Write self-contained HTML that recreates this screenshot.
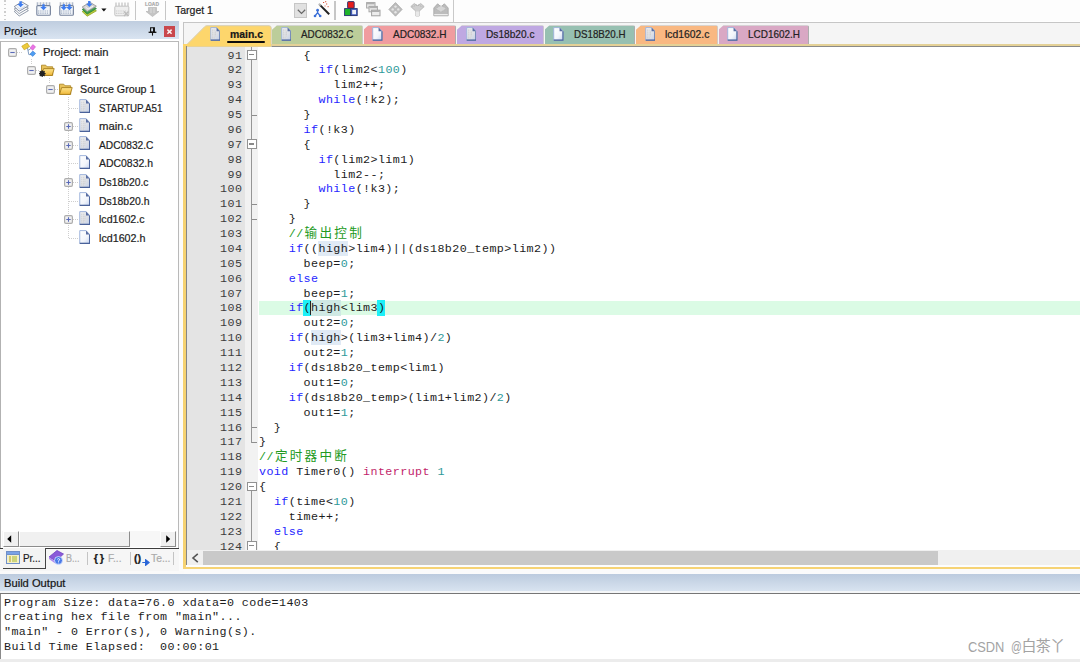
<!DOCTYPE html>
<html lang="zh"><head><meta charset="utf-8"><title>main - uVision</title>
<style>
html,body{margin:0;padding:0}
body{width:1080px;height:662px;position:relative;overflow:hidden;background:#fff;font-family:"Liberation Sans", "Noto Sans CJK SC", sans-serif;font-size:11.2px;color:#1a1a1a}
div,span,svg{position:absolute;box-sizing:border-box}
span.t{white-space:pre;line-height:1;-webkit-text-stroke:0.22px}
.code span, .out span, .ln span {position:static}
.code{font-family:"Liberation Mono", "Noto Sans CJK SC", monospace;font-size:11.7px;line-height:14.88px;height:14.88px;white-space:pre;color:#1c1c1c;left:259.0px;letter-spacing:0.419px}
.ln{font-family:"Liberation Mono", "Noto Sans CJK SC", monospace;font-size:11.7px;line-height:14.88px;height:14.88px;white-space:pre;color:#3c3c3c;left:187px;width:55.42px;text-align:right;letter-spacing:0.419px}
.out{font-family:"Liberation Mono", "Noto Sans CJK SC", monospace;font-size:11.7px;line-height:14.88px;height:14.88px;white-space:pre;color:#1c1c1c;left:4px;letter-spacing:0.419px}
.k{color:#2626ff} .n{color:#2e9a9a} .c{color:#229a22} .m{color:#c21f6b}
.cj{font-size:12.6px;letter-spacing:2.28px;line-height:1px;margin-left:1px;margin-right:-1px}
.hw{background:#e0eaf5;padding:1.3px 0 0.2px}
.hw2{background:#cfe9e4;padding:1.3px 0 0.2px}
.bm{background:#1cf0f8;margin-left:-0.8px;padding:1.3px 0 0.2px 0.8px}
</style></head>
<body>
<div style="left:0px;top:0px;width:1080px;height:21px;background:#fdfdfd"></div>
<div style="left:0px;top:0px;width:453.8px;height:21.6px;background:#fdfdfd;border-right:1.1px solid #c9c9c9"></div>
<div style="left:4.2px;top:0.2px;width:1.5px;height:1.4px;background:#cdcdcd"></div>
<div style="left:4.2px;top:3.9200000000000004px;width:1.5px;height:1.4px;background:#cdcdcd"></div>
<div style="left:4.2px;top:7.640000000000001px;width:1.5px;height:1.4px;background:#cdcdcd"></div>
<div style="left:4.2px;top:11.36px;width:1.5px;height:1.4px;background:#cdcdcd"></div>
<div style="left:4.2px;top:15.08px;width:1.5px;height:1.4px;background:#cdcdcd"></div>
<div style="left:4.2px;top:18.8px;width:1.5px;height:1.4px;background:#cdcdcd"></div>
<svg style="left:13px;top:0.8px" width="17" height="17" viewBox="0 0 17 17"><path d="M1.2 10.4l5 4.6 9.2-5.4-6.2-4z" fill="#fdfdfd" stroke="#8791a2" stroke-width="0.9"/><path d="M1.2 8l5 4.6 9.2-5.4-6.2-4z" fill="#fdfdfd" stroke="#8791a2" stroke-width="0.9"/><path d="M1.2 5.6l5 4.6 9.2-5.4-6.6-4z" fill="#f2f5fa" stroke="#7b8598" stroke-width="0.9"/><path d="M4 5.6l3 2.6 5.2-3" stroke="#c9d3e3" stroke-width="0.8" fill="none"/><path d="M6.3999999999999995 0.3v2.8h-2l3.2 3.2 3.2-3.2h-2v-2.8z" fill="#3f7df0"/></svg>
<svg style="left:35.5px;top:1.3px" width="15" height="15.5" viewBox="0 0 15 15.5"><path d="M1.5 1.2v3M4.5 1.2v3M7.5 1.2v3M10.5 1.2v3M13.5 1.2v3" stroke="#b4bccb" stroke-width="1.6"/><rect x="0.8" y="4.6" width="13.6" height="9.6" rx="1" fill="#f3f6fa" stroke="#76839c" stroke-width="1.1"/><path d="M2 10h11.4M2 12.2h11.4" stroke="#9fabc0" stroke-width="1.2" stroke-dasharray="1.3 0.9"/><path d="M6.3 3.2v2.8h-2l3.2 3.2 3.2-3.2h-2v-2.8z" fill="#3f7df0"/></svg>
<svg style="left:58.5px;top:1.3px" width="15" height="15.5" viewBox="0 0 15 15.5"><path d="M1.5 1.2v3M4.5 1.2v3M7.5 1.2v3M10.5 1.2v3M13.5 1.2v3" stroke="#b4bccb" stroke-width="1.6"/><rect x="0.8" y="4.6" width="13.6" height="9.6" rx="1" fill="#f3f6fa" stroke="#76839c" stroke-width="1.1"/><path d="M2 10h11.4M2 12.2h11.4" stroke="#9fabc0" stroke-width="1.2" stroke-dasharray="1.3 0.9"/><path d="M3.5999999999999996 3.2v2.8h-2l3.2 3.2 3.2-3.2h-2v-2.8z" fill="#3f7df0"/><path d="M9.200000000000001 3.2v2.8h-2l3.2 3.2 3.2-3.2h-2v-2.8z" fill="#3f7df0"/></svg>
<svg style="left:81px;top:0.8px" width="17" height="17" viewBox="0 0 17 17"><path d="M1.2 10.6l5 4.6 9.2-5.4-6.2-4z" fill="#b9cb3c" stroke="#8fa422" stroke-width="0.8"/><path d="M1.2 8.4l5 4.6 9.2-5.4-6.2-4z" fill="#3fa24c" stroke="#2a8038" stroke-width="0.8"/><path d="M1.2 6l5 4.6 9.2-5.4-6.6-4z" fill="#d2d2d2" stroke="#8f8f8f" stroke-width="0.8"/><path d="M4.4 5.8l2.6 2.4 5-3" stroke="#f4f4f4" stroke-width="1" fill="none"/><path d="M7.1000000000000005 0v2.8h-2l3.2 3.2 3.2-3.2h-2v-2.8z" fill="#3f7df0"/></svg>
<svg style="left:101px;top:7.5px" width="6" height="4" viewBox="0 0 6 4"><path d="M0.3 0.5h5.2l-2.6 3z" fill="#111"/></svg>
<svg style="left:114px;top:1.6px" width="16" height="15" viewBox="0 0 16 15"><path d="M2 0.5v4M5 0.5v4M8 0.5v4M11 0.5v4M14 0.5v4" stroke="#cfcfcf" stroke-width="1.6"/><rect x="0.8" y="4.2" width="14" height="9.6" rx="1" fill="#eeeeee" stroke="#c2c2c2" stroke-width="1"/><path d="M2 9h11.4M2 11.4h11.4" stroke="#cdcdcd" stroke-width="1.2" stroke-dasharray="1.3 0.9"/><path d="M10 9.5l4.5 4.5M14.5 9.5l-4.5 4.5" stroke="#bcbcbc" stroke-width="1.4"/></svg>
<div style="left:135px;top:1px;width:1.3px;height:18.5px;background:#c6c6c6"></div>
<span class="t" style="left:145px;top:2px;font-size:5.6px;color:#a8a8a8;letter-spacing:0.1px;font-weight:bold;transform:scaleX(0.86);transform-origin:0 0">LOAD</span>
<svg style="left:145px;top:7.3999999999999995px" width="15" height="10" viewBox="0 0 15 10"><path d="M3.5 0.5h8v4h2.5l-6.5 5-6.5-5h2.5z" fill="#c4c4c4" stroke="#b0b0b0" stroke-width="0.6"/><path d="M6 1v5M9 1v5" stroke="#dcdcdc" stroke-width="1"/></svg>
<div style="left:165px;top:1px;width:1.3px;height:18.5px;background:#c6c6c6"></div>
<span class="t" style="left:175px;top:5.45px;font-size:11.4px;color:#1c1c1c;transform:scaleX(0.9225);transform-origin:0 0;">Target 1</span>
<div style="left:294.2px;top:2.6px;width:13.2px;height:15.6px;background:#e1e1e1;border:1px solid #c6c6c6"></div>
<svg style="left:296.6px;top:8.6px" width="9" height="6" viewBox="0 0 9 6"><path d="M0.8 0.8l3.7 3.6 3.7-3.6" stroke="#666" stroke-width="1.2" fill="none"/></svg>
<svg style="left:313px;top:0.8px" width="18" height="17" viewBox="0 0 18 17"><path d="M6.6 3.6l9.6 9.6" stroke="#222" stroke-width="2"/><path d="M5.8 2.8l1.8 1.8" stroke="#bbb" stroke-width="2"/><path d="M4.6 11.6l-2.6 3.4M4.6 11.6l2.6 3.4M4.6 9.4v2.2" stroke="#3a6fd8" stroke-width="1.3" fill="none"/><circle cx="4.6" cy="9.2" r="1.4" fill="#3a6fd8"/><circle cx="2" cy="15" r="1.3" fill="#3a6fd8"/><circle cx="7.2" cy="15" r="1.3" fill="#3a6fd8"/><path d="M10 1.5h1.2M13 3h1.2M14.6 5.6h1M12.2 0.6h1M11.6 5h0.9" stroke="#d9553a" stroke-width="1.1"/></svg>
<div style="left:334.3px;top:1px;width:1.3px;height:18.5px;background:#c6c6c6"></div>
<svg style="left:344.3px;top:1.4px" width="14" height="15.5" viewBox="0 0 14 15.5"><rect x="3.6" y="0.6" width="6.6" height="6.6" rx="0.8" fill="#e61c1c" stroke="#24306e" stroke-width="0.9"/><rect x="0.6" y="7.6" width="6.2" height="7" fill="#1fb42a" stroke="#24306e" stroke-width="0.9"/><rect x="6.8" y="7.6" width="6.4" height="7" fill="#4a66c8" stroke="#24306e" stroke-width="0.9"/><rect x="8.2" y="9" width="3.8" height="4.2" fill="#eef0f8"/></svg>
<svg style="left:366px;top:2.0px" width="15" height="15" viewBox="0 0 15 15"><rect x="0.6" y="0.6" width="8.4" height="5.4" fill="#e8e8e8" stroke="#a8a8a8"/><path d="M1 1.6h7.6" stroke="#b0b0b0" stroke-width="1.4"/><rect x="3" y="4.4" width="8.4" height="5.4" fill="#e8e8e8" stroke="#a8a8a8"/><path d="M3.4 5.4h7.6" stroke="#b0b0b0" stroke-width="1.4"/><rect x="5.6" y="8.2" width="8.4" height="5.6" fill="#ececec" stroke="#a0a0a0"/><path d="M6 9.2h7.6" stroke="#a8a8a8" stroke-width="1.4"/></svg>
<svg style="left:388px;top:1.8px" width="15" height="15" viewBox="0 0 15 15"><path d="M7.5 0.6l6.6 6.8-6.6 6.8-6.6-6.8z" fill="#bdbdbd" stroke="#a8a8a8" stroke-width="0.8"/><circle cx="7.5" cy="4.6" r="1.2" fill="#e6e6e6"/><circle cx="7.5" cy="10.2" r="1.2" fill="#e6e6e6"/><circle cx="4.7" cy="7.4" r="1.2" fill="#e6e6e6"/><circle cx="10.3" cy="7.4" r="1.2" fill="#e6e6e6"/></svg>
<svg style="left:410px;top:1.8px" width="15" height="15" viewBox="0 0 15 15"><path d="M0.8 4.6l3.4-3 3.2 2 3.4-2 3.4 3-5 4.6v4.8h-3.4v-4.8z" fill="#d0d0d0" stroke="#b0b0b0" stroke-width="0.8"/><path d="M5.8 9.4h3.4v4.6h-3.4z" fill="#e8e8e8"/><path d="M2.4 4.8l5-2 5 2" stroke="#aaa" stroke-width="0.9" fill="none" stroke-dasharray="1 1"/></svg>
<svg style="left:432.6px;top:1.8px" width="16" height="15" viewBox="0 0 16 15"><path d="M0.8 6l3.8-4.2 3.4 3 3.4-3 3.8 4.2v7.8h-14.4z" fill="#bcbcbc" stroke="#a6a6a6" stroke-width="0.8"/><path d="M2.6 6.6l5.4-3 5.4 3-5.4 3.4z" fill="#d6d6d6" stroke="#aaa" stroke-width="0.6" stroke-dasharray="1 0.8"/><path d="M1.2 12.6h13.6" stroke="#ececec" stroke-width="1.2"/></svg>
<div style="left:0px;top:21.3px;width:179px;height:17.7px;background:linear-gradient(#bfcddf,#d9e4f1)"></div>
<span class="t" style="left:4px;top:26.05px;font-size:11.4px;color:#151515;transform:scaleX(0.9160);transform-origin:0 0;">Project</span>
<svg style="left:148px;top:27px" width="9" height="9" viewBox="0 0 9 9"><path d="M2.6 0.7h3.8v4.4h-3.8z" fill="none" stroke="#111" stroke-width="1.1"/><path d="M5.7 0.7v4.4" stroke="#111" stroke-width="1.4"/><path d="M0.6 5.3h7.8" stroke="#111" stroke-width="1.3"/><path d="M4.5 5.6v3" stroke="#111" stroke-width="1.1"/></svg>
<div style="left:164px;top:26px;width:11px;height:11px;background:#c9474c"></div>
<svg style="left:164px;top:26px" width="11" height="11" viewBox="0 0 11 11"><path d="M3.4 3.6l4.2 4.2M7.6 3.6l-4.2 4.2" stroke="#fbeeee" stroke-width="1.5" fill="none"/></svg>
<div style="left:0px;top:40.7px;width:179px;height:507.3px;background:#fff;border:1.2px solid #b9b9b9;border-left:1.4px solid #b2b2b2;border-bottom:0"></div>
<svg width="0" height="0" style="left:0;top:0"><defs><linearGradient id="fg1" x1="0" y1="0" x2="1" y2="1"><stop offset="0" stop-color="#f2f2f2"/><stop offset="0.6" stop-color="#dcdfe6"/><stop offset="1" stop-color="#c2cfe8"/></linearGradient><linearGradient id="fg2" x1="0" y1="0" x2="1" y2="1"><stop offset="0" stop-color="#ffffff"/><stop offset="0.6" stop-color="#f2f5fb"/><stop offset="1" stop-color="#c6d4f0"/></linearGradient><linearGradient id="fo" x1="0" y1="0" x2="0" y2="1"><stop offset="0" stop-color="#fde28a"/><stop offset="1" stop-color="#f0b93a"/></linearGradient></defs></svg>
<svg style="left:8px;top:47.65px" width="9" height="9" viewBox="0 0 9 9"><rect x="0.6" y="0.6" width="7.8" height="7.8" rx="1.3" fill="#f1f1f1" stroke="#adadad" stroke-width="1.2"/><path d="M2.3 4.5h4.4" stroke="#5a6ab8" stroke-width="1.1"/></svg>
<div style="left:17px;top:51.650000000000006px;width:5px;height:1px;background:repeating-linear-gradient(90deg,#cfcfcf 0 1px,transparent 1px 2px)"></div>
<svg style="left:21px;top:42.45px" width="16" height="16" viewBox="0 0 16 16"><path d="M6.4 5.4l1.4 7.2h2.6M7 8.4l2.6-1.6" stroke="#7f9cc0" stroke-width="1" fill="none"/><path d="M0.8 4.2l5.4-3.2 2.4 3.6-5.4 3.2z" fill="#eccb3c" stroke="#c8a21c" stroke-width="0.7"/><path d="M9 6l2.8-3.4 2.8 2.2-2.8 3.4z" fill="#ea74e6" stroke="#c850c0" stroke-width="0.5"/><path d="M9 12l2.8-3 2.8 2.4-2.8 3z" fill="#4f9df2" stroke="#2d74cc" stroke-width="0.5"/></svg>
<span class="t" style="left:43px;top:46.70px;font-size:11.4px;color:#1e1e1e;transform:scaleX(0.9846);transform-origin:0 0;">Project: main</span>
<div style="left:30.6px;top:59.45px;width:1px;height:5.6200000000000045px;background:repeating-linear-gradient(180deg,#cfcfcf 0 1px,transparent 1px 2px)"></div>
<svg style="left:27px;top:66.27px" width="9" height="9" viewBox="0 0 9 9"><rect x="0.6" y="0.6" width="7.8" height="7.8" rx="1.3" fill="#f1f1f1" stroke="#adadad" stroke-width="1.2"/><path d="M2.3 4.5h4.4" stroke="#5a6ab8" stroke-width="1.1"/></svg>
<div style="left:36px;top:70.27000000000001px;width:4px;height:1px;background:repeating-linear-gradient(90deg,#cfcfcf 0 1px,transparent 1px 2px)"></div>
<svg style="left:38.8px;top:63.07px" width="16" height="14" viewBox="0 0 16 14"><path d="M2.5 2.2h4.2l1.4 1.6h5.6v8.6h-11.2z" fill="#e8c25a" stroke="#b08a2a" stroke-width="0.9"/><path d="M4.6 5.6h10.6l-2 6.8h-10.6z" fill="url(#fo)" stroke="#a87f1e" stroke-width="0.9"/><circle cx="3.2" cy="10.6" r="2.6" fill="#222"/><circle cx="3.2" cy="10.6" r="1" fill="#aaa"/><path d="M3.2 7.2v6.8M-0.2 10.6h6.8M0.8 8.2l4.8 4.8M5.6 8.2l-4.8 4.8" stroke="#222" stroke-width="1.1"/></svg>
<span class="t" style="left:62px;top:65.32px;font-size:11.4px;color:#1e1e1e;transform:scaleX(0.9225);transform-origin:0 0;">Target 1</span>
<div style="left:49px;top:78.07000000000001px;width:1px;height:5.61999999999999px;background:repeating-linear-gradient(180deg,#cfcfcf 0 1px,transparent 1px 2px)"></div>
<svg style="left:46px;top:84.89px" width="9" height="9" viewBox="0 0 9 9"><rect x="0.6" y="0.6" width="7.8" height="7.8" rx="1.3" fill="#f1f1f1" stroke="#adadad" stroke-width="1.2"/><path d="M2.3 4.5h4.4" stroke="#5a6ab8" stroke-width="1.1"/></svg>
<div style="left:55px;top:88.89px;width:5px;height:1px;background:repeating-linear-gradient(90deg,#cfcfcf 0 1px,transparent 1px 2px)"></div>
<svg style="left:57.2px;top:81.69px" width="16" height="14" viewBox="0 0 16 14"><path d="M2.5 2.2h4.2l1.4 1.6h5.6v8.6h-11.2z" fill="#e8c25a" stroke="#b08a2a" stroke-width="0.9"/><path d="M4.6 5.6h10.6l-2 6.8h-10.6z" fill="url(#fo)" stroke="#a87f1e" stroke-width="0.9"/></svg>
<span class="t" style="left:80px;top:83.94px;font-size:11.4px;color:#1e1e1e;transform:scaleX(0.9381);transform-origin:0 0;">Source Group 1</span>
<div style="left:68px;top:96.69px;width:1px;height:140.96000000000004px;background:repeating-linear-gradient(180deg,#cfcfcf 0 1px,transparent 1px 2px)"></div>
<div style="left:69px;top:107.51px;width:9px;height:1px;background:repeating-linear-gradient(90deg,#cfcfcf 0 1px,transparent 1px 2px)"></div>
<svg style="left:79px;top:99.21px" width="11.4" height="14.0" viewBox="0 0 12 14" preserveAspectRatio="none"><path d="M0.8 0.6h6.6l3.8 3.8v9h-10.4z" fill="url(#fg1)" stroke="#9db3dc" stroke-width="1"/><path d="M2.4 3.2h3.6M2.4 5.2h4.6M2.4 7.2h4.6M2.4 9.2h4M2.4 11h3" stroke="#c9c9c9" stroke-width="1.1" stroke-dasharray="0.9 0.8"/><path d="M7.4 0.6l3.8 3.8h-3.8z" fill="#5a6fa3"/><path d="M11.2 4.4v9h-10.4" fill="none" stroke="#4a629a" stroke-width="1.2"/></svg>
<span class="t" style="left:99px;top:102.56px;font-size:11.4px;color:#1e1e1e;transform:scaleX(0.8565);transform-origin:0 0;">STARTUP.A51</span>
<svg style="left:64px;top:122.13px" width="9" height="9" viewBox="0 0 9 9"><rect x="0.6" y="0.6" width="7.8" height="7.8" rx="1.3" fill="#f1f1f1" stroke="#adadad" stroke-width="1.2"/><path d="M2.3 4.5h4.4M4.5 2.3v4.4" stroke="#5a6ab8" stroke-width="1.1"/></svg>
<div style="left:73px;top:126.13000000000001px;width:5px;height:1px;background:repeating-linear-gradient(90deg,#cfcfcf 0 1px,transparent 1px 2px)"></div>
<svg style="left:79px;top:117.83px" width="11.4" height="14.0" viewBox="0 0 12 14" preserveAspectRatio="none"><path d="M0.8 0.6h6.6l3.8 3.8v9h-10.4z" fill="url(#fg1)" stroke="#9db3dc" stroke-width="1"/><path d="M2.4 3.2h3.6M2.4 5.2h4.6M2.4 7.2h4.6M2.4 9.2h4M2.4 11h3" stroke="#c9c9c9" stroke-width="1.1" stroke-dasharray="0.9 0.8"/><path d="M7.4 0.6l3.8 3.8h-3.8z" fill="#5a6fa3"/><path d="M11.2 4.4v9h-10.4" fill="none" stroke="#4a629a" stroke-width="1.2"/></svg>
<span class="t" style="left:99px;top:121.18px;font-size:11.4px;color:#1e1e1e;transform:scaleX(0.9977);transform-origin:0 0;">main.c</span>
<svg style="left:64px;top:140.75px" width="9" height="9" viewBox="0 0 9 9"><rect x="0.6" y="0.6" width="7.8" height="7.8" rx="1.3" fill="#f1f1f1" stroke="#adadad" stroke-width="1.2"/><path d="M2.3 4.5h4.4M4.5 2.3v4.4" stroke="#5a6ab8" stroke-width="1.1"/></svg>
<div style="left:73px;top:144.75px;width:5px;height:1px;background:repeating-linear-gradient(90deg,#cfcfcf 0 1px,transparent 1px 2px)"></div>
<svg style="left:79px;top:136.45px" width="11.4" height="14.0" viewBox="0 0 12 14" preserveAspectRatio="none"><path d="M0.8 0.6h6.6l3.8 3.8v9h-10.4z" fill="url(#fg1)" stroke="#9db3dc" stroke-width="1"/><path d="M2.4 3.2h3.6M2.4 5.2h4.6M2.4 7.2h4.6M2.4 9.2h4M2.4 11h3" stroke="#c9c9c9" stroke-width="1.1" stroke-dasharray="0.9 0.8"/><path d="M7.4 0.6l3.8 3.8h-3.8z" fill="#5a6fa3"/><path d="M11.2 4.4v9h-10.4" fill="none" stroke="#4a629a" stroke-width="1.2"/></svg>
<span class="t" style="left:99px;top:139.80px;font-size:11.4px;color:#1e1e1e;transform:scaleX(0.8959);transform-origin:0 0;">ADC0832.C</span>
<div style="left:69px;top:163.37px;width:9px;height:1px;background:repeating-linear-gradient(90deg,#cfcfcf 0 1px,transparent 1px 2px)"></div>
<svg style="left:79px;top:155.07px" width="11.4" height="14.0" viewBox="0 0 12 14" preserveAspectRatio="none"><path d="M0.8 0.6h6.6l3.8 3.8v9h-10.4z" fill="url(#fg2)" stroke="#9db3dc" stroke-width="1"/><path d="M7.4 0.6l3.8 3.8h-3.8z" fill="#5a6fa3"/><path d="M11.2 4.4v9h-10.4" fill="none" stroke="#4a629a" stroke-width="1.2"/></svg>
<span class="t" style="left:99px;top:158.42px;font-size:11.4px;color:#1e1e1e;transform:scaleX(0.9162);transform-origin:0 0;">ADC0832.h</span>
<svg style="left:64px;top:177.99px" width="9" height="9" viewBox="0 0 9 9"><rect x="0.6" y="0.6" width="7.8" height="7.8" rx="1.3" fill="#f1f1f1" stroke="#adadad" stroke-width="1.2"/><path d="M2.3 4.5h4.4M4.5 2.3v4.4" stroke="#5a6ab8" stroke-width="1.1"/></svg>
<div style="left:73px;top:181.99px;width:5px;height:1px;background:repeating-linear-gradient(90deg,#cfcfcf 0 1px,transparent 1px 2px)"></div>
<svg style="left:79px;top:173.69px" width="11.4" height="14.0" viewBox="0 0 12 14" preserveAspectRatio="none"><path d="M0.8 0.6h6.6l3.8 3.8v9h-10.4z" fill="url(#fg1)" stroke="#9db3dc" stroke-width="1"/><path d="M2.4 3.2h3.6M2.4 5.2h4.6M2.4 7.2h4.6M2.4 9.2h4M2.4 11h3" stroke="#c9c9c9" stroke-width="1.1" stroke-dasharray="0.9 0.8"/><path d="M7.4 0.6l3.8 3.8h-3.8z" fill="#5a6fa3"/><path d="M11.2 4.4v9h-10.4" fill="none" stroke="#4a629a" stroke-width="1.2"/></svg>
<span class="t" style="left:99px;top:177.04px;font-size:11.4px;color:#1e1e1e;transform:scaleX(0.9082);transform-origin:0 0;">Ds18b20.c</span>
<div style="left:69px;top:200.61px;width:9px;height:1px;background:repeating-linear-gradient(90deg,#cfcfcf 0 1px,transparent 1px 2px)"></div>
<svg style="left:79px;top:192.31px" width="11.4" height="14.0" viewBox="0 0 12 14" preserveAspectRatio="none"><path d="M0.8 0.6h6.6l3.8 3.8v9h-10.4z" fill="url(#fg2)" stroke="#9db3dc" stroke-width="1"/><path d="M7.4 0.6l3.8 3.8h-3.8z" fill="#5a6fa3"/><path d="M11.2 4.4v9h-10.4" fill="none" stroke="#4a629a" stroke-width="1.2"/></svg>
<span class="t" style="left:99px;top:195.66px;font-size:11.4px;color:#1e1e1e;transform:scaleX(0.9158);transform-origin:0 0;">Ds18b20.h</span>
<svg style="left:64px;top:215.23px" width="9" height="9" viewBox="0 0 9 9"><rect x="0.6" y="0.6" width="7.8" height="7.8" rx="1.3" fill="#f1f1f1" stroke="#adadad" stroke-width="1.2"/><path d="M2.3 4.5h4.4M4.5 2.3v4.4" stroke="#5a6ab8" stroke-width="1.1"/></svg>
<div style="left:73px;top:219.23000000000002px;width:5px;height:1px;background:repeating-linear-gradient(90deg,#cfcfcf 0 1px,transparent 1px 2px)"></div>
<svg style="left:79px;top:210.93px" width="11.4" height="14.0" viewBox="0 0 12 14" preserveAspectRatio="none"><path d="M0.8 0.6h6.6l3.8 3.8v9h-10.4z" fill="url(#fg1)" stroke="#9db3dc" stroke-width="1"/><path d="M2.4 3.2h3.6M2.4 5.2h4.6M2.4 7.2h4.6M2.4 9.2h4M2.4 11h3" stroke="#c9c9c9" stroke-width="1.1" stroke-dasharray="0.9 0.8"/><path d="M7.4 0.6l3.8 3.8h-3.8z" fill="#5a6fa3"/><path d="M11.2 4.4v9h-10.4" fill="none" stroke="#4a629a" stroke-width="1.2"/></svg>
<span class="t" style="left:99px;top:214.28px;font-size:11.4px;color:#1e1e1e;transform:scaleX(0.9323);transform-origin:0 0;">lcd1602.c</span>
<div style="left:69px;top:237.85000000000002px;width:9px;height:1px;background:repeating-linear-gradient(90deg,#cfcfcf 0 1px,transparent 1px 2px)"></div>
<svg style="left:79px;top:229.55px" width="11.4" height="14.0" viewBox="0 0 12 14" preserveAspectRatio="none"><path d="M0.8 0.6h6.6l3.8 3.8v9h-10.4z" fill="url(#fg2)" stroke="#9db3dc" stroke-width="1"/><path d="M7.4 0.6l3.8 3.8h-3.8z" fill="#5a6fa3"/><path d="M11.2 4.4v9h-10.4" fill="none" stroke="#4a629a" stroke-width="1.2"/></svg>
<span class="t" style="left:99px;top:232.90px;font-size:11.4px;color:#1e1e1e;transform:scaleX(0.9405);transform-origin:0 0;">lcd1602.h</span>
<div style="left:2px;top:530.6px;width:175px;height:16px;background:#f7f7f7"></div>
<div style="left:2.6px;top:530.6px;width:16.2px;height:16px;background:#f0f0f0;border:1px solid #fff;border-right:1.7px solid #8c8c8c;border-bottom:1.5px solid #8c8c8c"></div>
<svg style="left:7.4px;top:535px" width="4.4" height="8" viewBox="0 0 5 8" preserveAspectRatio="none"><path d="M4.8 0.2v7.6l-4.6-3.8z" fill="#000"/></svg>
<div style="left:18.8px;top:530.6px;width:111.4px;height:16px;background:#f0f0f0;border:1px solid #fff;border-right:1.7px solid #8c8c8c;border-bottom:1.5px solid #8c8c8c"></div>
<div style="left:160.4px;top:530.6px;width:15.8px;height:16px;background:#f0f0f0;border:1px solid #fff;border-right:1.7px solid #8c8c8c;border-bottom:1.5px solid #8c8c8c"></div>
<svg style="left:166.3px;top:535px" width="4.4" height="8" viewBox="0 0 5 8" preserveAspectRatio="none"><path d="M0.2 0.2v7.6l4.6-3.8z" fill="#000"/></svg>
<div style="left:0px;top:547.5px;width:179px;height:23px;background:#f6f6f6"></div>
<div style="left:0px;top:547.6px;width:179px;height:1.2px;background:#3c3c3c"></div>
<div style="left:2.6px;top:547.6px;width:43px;height:21px;background:#f3f3f3;border-right:1.3px solid #444;border-bottom:1.3px solid #444"></div>
<svg style="left:6.3px;top:550.8px" width="14" height="13" viewBox="0 0 14 13"><rect x="0.5" y="0.5" width="13" height="12" fill="#f3f0c8" stroke="#6f8fc8"/><rect x="0.5" y="0.5" width="13" height="3" fill="#7aa2e6" stroke="#6f8fc8"/><path d="M3 6h2M3 8h2M3 10h2" stroke="#b8a010" stroke-width="1.1"/><path d="M6 6h5M6 8h5M6 10h5" stroke="#a8b82a" stroke-width="1.1"/></svg>
<span class="t" style="left:22.5px;top:553.05px;font-size:11.4px;color:#1c1c1c;transform:scaleX(0.8632);transform-origin:0 0;">Pr...</span>
<svg style="left:47.6px;top:549.4px" width="17" height="17" viewBox="0 0 17 17"><path d="M1 8l8-6.5 6.5 3.5-7.5 7z" fill="#8a5ad8" stroke="#7040c0" stroke-width="0.8"/><path d="M1 8l7 5 0 2-7-5z" fill="#b08af0"/><circle cx="10.5" cy="11.5" r="4" fill="#4a7ae8" stroke="#dfe8ff" stroke-width="0.8"/><path d="M9.3 10.3q1.2-1.4 2.4 0q0.2 0.9-1.2 1.5v0.9M10.5 13.6v0.8" stroke="#fff" stroke-width="0.9" fill="none"/></svg>
<span class="t" style="left:66px;top:553.05px;font-size:11.4px;color:#ababab;transform:scaleX(0.7892);transform-origin:0 0;">B...</span>
<div style="left:87.3px;top:552px;width:1px;height:13px;background:#c4c4c4"></div>
<span class="t" style="left:93.8px;top:552.59px;font-size:11px;color:#1c1c1c;font-weight:bold;">{</span>
<span class="t" style="left:99.8px;top:552.59px;font-size:11px;color:#1c1c1c;font-weight:bold;">}</span>
<span class="t" style="left:108px;top:553.05px;font-size:11.4px;color:#ababab;transform:scaleX(0.8881);transform-origin:0 0;">F...</span>
<div style="left:130px;top:552px;width:1px;height:13px;background:#c4c4c4"></div>
<span class="t" style="left:134.2px;top:552.59px;font-size:11px;color:#1c1c1c;transform:scaleX(0.9827);transform-origin:0 0;font-weight:bold;">()</span>
<svg style="left:141.6px;top:559.2px" width="8" height="7" viewBox="0 0 8 7"><path d="M0.3 3.5h4M3.6 0.6l3.6 2.9-3.6 2.9z" stroke="#2a66d8" fill="#2a66d8" stroke-width="1.1"/></svg>
<span class="t" style="left:150.5px;top:553.05px;font-size:11.4px;color:#ababab;transform:scaleX(0.9052);transform-origin:0 0;">Te...</span>
<div style="left:173.3px;top:552px;width:1px;height:13px;background:#c4c4c4"></div>
<div style="left:179px;top:21px;width:4.5px;height:552px;background:#fbfbfb"></div>
<div style="left:182.6px;top:21.9px;width:898px;height:1.3px;background:#c6c6c6"></div>
<div style="left:182.6px;top:23.2px;width:898px;height:21px;background:#f5f5f5"></div>
<div style="left:182.6px;top:22px;width:1px;height:24px;background:#c4c4c4"></div>
<div style="left:183.4px;top:43.8px;width:897px;height:2.4px;background:#e4d197"></div>
<div style="left:185.6px;top:46.2px;width:895px;height:1.2px;background:#8a8a8a"></div>
<div style="left:272px;top:25.3px;width:90.5px;height:18.7px;background:#bccd9a;border-top:1px solid #d0d0d0;border-right:1px solid #adadad;border-radius:0 2px 0 0;clip-path:polygon(5px 0,100% 0,100% 100%,0 100%,0 4.5px)"></div>
<svg style="left:280.5px;top:27.10px" width="10.7" height="13.8" viewBox="0 0 12 14" preserveAspectRatio="none"><path d="M0.8 0.6h6.6l3.8 3.8v9h-10.4z" fill="url(#fg1)" stroke="#9db3dc" stroke-width="1"/><path d="M2.4 3.2h3.6M2.4 5.2h4.6M2.4 7.2h4.6M2.4 9.2h4M2.4 11h3" stroke="#c9c9c9" stroke-width="1.1" stroke-dasharray="0.9 0.8"/><path d="M7.4 0.6l3.8 3.8h-3.8z" fill="#5a6fa3"/><path d="M11.2 4.4v9h-10.4" fill="none" stroke="#4a629a" stroke-width="1.2"/></svg>
<span class="t" style="left:301px;top:28.92px;font-size:11.2px;color:#222;transform:scaleX(0.8785);transform-origin:0 0;">ADC0832.C</span>
<div style="left:363.5px;top:25.3px;width:92.5px;height:18.7px;background:#f09c9f;border-top:1px solid #d0d0d0;border-right:1px solid #adadad;border-radius:0 2px 0 0;clip-path:polygon(5px 0,100% 0,100% 100%,0 100%,0 4.5px)"></div>
<svg style="left:372px;top:27.10px" width="10.7" height="13.8" viewBox="0 0 12 14" preserveAspectRatio="none"><path d="M0.8 0.6h6.6l3.8 3.8v9h-10.4z" fill="url(#fg2)" stroke="#9db3dc" stroke-width="1"/><path d="M7.4 0.6l3.8 3.8h-3.8z" fill="#5a6fa3"/><path d="M11.2 4.4v9h-10.4" fill="none" stroke="#4a629a" stroke-width="1.2"/></svg>
<span class="t" style="left:393px;top:28.92px;font-size:11.2px;color:#222;transform:scaleX(0.8952);transform-origin:0 0;">ADC0832.H</span>
<div style="left:457px;top:25.3px;width:86.5px;height:18.7px;background:#bfa8e2;border-top:1px solid #d0d0d0;border-right:1px solid #adadad;border-radius:0 2px 0 0;clip-path:polygon(5px 0,100% 0,100% 100%,0 100%,0 4.5px)"></div>
<svg style="left:465.5px;top:27.10px" width="10.7" height="13.8" viewBox="0 0 12 14" preserveAspectRatio="none"><path d="M0.8 0.6h6.6l3.8 3.8v9h-10.4z" fill="url(#fg1)" stroke="#9db3dc" stroke-width="1"/><path d="M2.4 3.2h3.6M2.4 5.2h4.6M2.4 7.2h4.6M2.4 9.2h4M2.4 11h3" stroke="#c9c9c9" stroke-width="1.1" stroke-dasharray="0.9 0.8"/><path d="M7.4 0.6l3.8 3.8h-3.8z" fill="#5a6fa3"/><path d="M11.2 4.4v9h-10.4" fill="none" stroke="#4a629a" stroke-width="1.2"/></svg>
<span class="t" style="left:486px;top:28.92px;font-size:11.2px;color:#222;transform:scaleX(0.9058);transform-origin:0 0;">Ds18b20.c</span>
<div style="left:544.5px;top:25.3px;width:90.5px;height:18.7px;background:#97c0b1;border-top:1px solid #d0d0d0;border-right:1px solid #adadad;border-radius:0 2px 0 0;clip-path:polygon(5px 0,100% 0,100% 100%,0 100%,0 4.5px)"></div>
<svg style="left:553px;top:27.10px" width="10.7" height="13.8" viewBox="0 0 12 14" preserveAspectRatio="none"><path d="M0.8 0.6h6.6l3.8 3.8v9h-10.4z" fill="url(#fg2)" stroke="#9db3dc" stroke-width="1"/><path d="M7.4 0.6l3.8 3.8h-3.8z" fill="#5a6fa3"/><path d="M11.2 4.4v9h-10.4" fill="none" stroke="#4a629a" stroke-width="1.2"/></svg>
<span class="t" style="left:574px;top:28.92px;font-size:11.2px;color:#222;transform:scaleX(0.8707);transform-origin:0 0;">DS18B20.H</span>
<div style="left:636px;top:25.3px;width:81.5px;height:18.7px;background:#f9b882;border-top:1px solid #d0d0d0;border-right:1px solid #adadad;border-radius:0 2px 0 0;clip-path:polygon(5px 0,100% 0,100% 100%,0 100%,0 4.5px)"></div>
<svg style="left:644.5px;top:27.10px" width="10.7" height="13.8" viewBox="0 0 12 14" preserveAspectRatio="none"><path d="M0.8 0.6h6.6l3.8 3.8v9h-10.4z" fill="url(#fg1)" stroke="#9db3dc" stroke-width="1"/><path d="M2.4 3.2h3.6M2.4 5.2h4.6M2.4 7.2h4.6M2.4 9.2h4M2.4 11h3" stroke="#c9c9c9" stroke-width="1.1" stroke-dasharray="0.9 0.8"/><path d="M7.4 0.6l3.8 3.8h-3.8z" fill="#5a6fa3"/><path d="M11.2 4.4v9h-10.4" fill="none" stroke="#4a629a" stroke-width="1.2"/></svg>
<span class="t" style="left:665px;top:28.92px;font-size:11.2px;color:#222;transform:scaleX(0.9281);transform-origin:0 0;">lcd1602.c</span>
<div style="left:718.5px;top:25.3px;width:90.5px;height:18.7px;background:#d9a8c4;border-top:1px solid #d0d0d0;border-right:1px solid #adadad;border-radius:0 2px 0 0;clip-path:polygon(5px 0,100% 0,100% 100%,0 100%,0 4.5px)"></div>
<svg style="left:727px;top:27.10px" width="10.7" height="13.8" viewBox="0 0 12 14" preserveAspectRatio="none"><path d="M0.8 0.6h6.6l3.8 3.8v9h-10.4z" fill="url(#fg2)" stroke="#9db3dc" stroke-width="1"/><path d="M7.4 0.6l3.8 3.8h-3.8z" fill="#5a6fa3"/><path d="M11.2 4.4v9h-10.4" fill="none" stroke="#4a629a" stroke-width="1.2"/></svg>
<span class="t" style="left:747.5px;top:28.92px;font-size:11.2px;color:#222;transform:scaleX(0.8885);transform-origin:0 0;">LCD1602.H</span>
<svg style="left:185.6px;top:24.8px" width="87" height="22" viewBox="0 0 87 22"><path d="M0.6 22V19.8L18.6 1.7Q19.6 0.7 21 0.7H83Q85.2 0.7 85.2 3V22z" fill="#fdd66c" stroke="#d6ceb6" stroke-width="1"/></svg>
<div style="left:183.4px;top:43.6px;width:87.4px;height:2.7px;background:#fdd66c"></div>
<svg style="left:209.8px;top:27.10px" width="10.7" height="13.8" viewBox="0 0 12 14" preserveAspectRatio="none"><path d="M0.8 0.6h6.6l3.8 3.8v9h-10.4z" fill="url(#fg1)" stroke="#9db3dc" stroke-width="1"/><path d="M2.4 3.2h3.6M2.4 5.2h4.6M2.4 7.2h4.6M2.4 9.2h4M2.4 11h3" stroke="#c9c9c9" stroke-width="1.1" stroke-dasharray="0.9 0.8"/><path d="M7.4 0.6l3.8 3.8h-3.8z" fill="#5a6fa3"/><path d="M11.2 4.4v9h-10.4" fill="none" stroke="#4a629a" stroke-width="1.2"/></svg>
<span class="t" style="left:230px;top:28.93px;font-size:11.3px;color:#161616;transform:scaleX(0.9218);transform-origin:0 0;font-weight:bold;">main.c</span>
<div style="left:227px;top:41.4px;width:38px;height:1.8px;background:#0c0c0c;border-radius:1px"></div>
<div style="left:183.4px;top:46px;width:2.2px;height:523px;background:#f5d272"></div>
<div style="left:185.6px;top:46px;width:1.6px;height:519.6px;background:#858585"></div>
<div style="left:186.8px;top:47px;width:58.2px;height:504px;background:#e4e4e4"></div>
<div style="left:245px;top:47px;width:12.5px;height:504px;background:#f2f2f2"></div>
<div style="left:257.5px;top:47px;width:823px;height:504px;background:#fff"></div>
<div style="left:0;top:47px;width:1080px;height:504px;overflow:hidden">
<div style="left:259px;top:253.56px;width:821px;height:14.68px;background:#dbfbe5"></div>
<div class="ln" style="top:1.50px">91</div>
<div class="code" style="top:1.50px">      {</div>
<div class="ln" style="top:16.38px">92</div>
<div class="code" style="top:16.38px">        <span class="k">if</span>(lim2&lt;<span class="n">100</span>)</div>
<div class="ln" style="top:31.26px">93</div>
<div class="code" style="top:31.26px">          lim2++;</div>
<div class="ln" style="top:46.14px">94</div>
<div class="code" style="top:46.14px">        <span class="k">while</span>(!k2);</div>
<div class="ln" style="top:61.02px">95</div>
<div class="code" style="top:61.02px">      }</div>
<div class="ln" style="top:75.90px">96</div>
<div class="code" style="top:75.90px">      <span class="k">if</span>(!k3)</div>
<div class="ln" style="top:90.78px">97</div>
<div class="code" style="top:90.78px">      {</div>
<div class="ln" style="top:105.66px">98</div>
<div class="code" style="top:105.66px">        <span class="k">if</span>(lim2&gt;lim1)</div>
<div class="ln" style="top:120.54px">99</div>
<div class="code" style="top:120.54px">          lim2--;</div>
<div class="ln" style="top:135.42px">100</div>
<div class="code" style="top:135.42px">        <span class="k">while</span>(!k3);</div>
<div class="ln" style="top:150.30px">101</div>
<div class="code" style="top:150.30px">      }</div>
<div class="ln" style="top:165.18px">102</div>
<div class="code" style="top:165.18px">    }</div>
<div class="ln" style="top:180.06px">103</div>
<div class="code" style="top:180.06px">    <span class="c">//<span class="cj">输出控制</span></span></div>
<div class="ln" style="top:194.94px">104</div>
<div class="code" style="top:194.94px">    <span class="k">if</span>((<span class="hw">high</span>&gt;lim4)||(ds18b20_temp&gt;lim2))</div>
<div class="ln" style="top:209.82px">105</div>
<div class="code" style="top:209.82px">      beep=<span class="n">0</span>;</div>
<div class="ln" style="top:224.70px">106</div>
<div class="code" style="top:224.70px">    <span class="k">else</span></div>
<div class="ln" style="top:239.58px">107</div>
<div class="code" style="top:239.58px">      beep=<span class="n">1</span>;</div>
<div class="ln" style="top:254.46px">108</div>
<div class="code" style="top:254.46px">    <span class="k">if</span><span class="bm">(</span><span class="hw2">high</span>&lt;lim3<span class="bm">)</span></div>
<div class="ln" style="top:269.34px">109</div>
<div class="code" style="top:269.34px">      out2=<span class="n">0</span>;</div>
<div class="ln" style="top:284.22px">110</div>
<div class="code" style="top:284.22px">    <span class="k">if</span>(<span class="hw">high</span>&gt;(lim3+lim4)/<span class="n">2</span>)</div>
<div class="ln" style="top:299.10px">111</div>
<div class="code" style="top:299.10px">      out2=<span class="n">1</span>;</div>
<div class="ln" style="top:313.98px">112</div>
<div class="code" style="top:313.98px">    <span class="k">if</span>(ds18b20_temp&lt;lim1)</div>
<div class="ln" style="top:328.86px">113</div>
<div class="code" style="top:328.86px">      out1=<span class="n">0</span>;</div>
<div class="ln" style="top:343.74px">114</div>
<div class="code" style="top:343.74px">    <span class="k">if</span>(ds18b20_temp&gt;(lim1+lim2)/<span class="n">2</span>)</div>
<div class="ln" style="top:358.62px">115</div>
<div class="code" style="top:358.62px">      out1=<span class="n">1</span>;</div>
<div class="ln" style="top:373.50px">116</div>
<div class="code" style="top:373.50px">  }</div>
<div class="ln" style="top:388.38px">117</div>
<div class="code" style="top:388.38px">}</div>
<div class="ln" style="top:403.26px">118</div>
<div class="code" style="top:403.26px"><span class="c">//<span class="cj">定时器中断</span></span></div>
<div class="ln" style="top:418.14px">119</div>
<div class="code" style="top:418.14px"><span class="k">void</span> Timer0() <span class="m">interrupt</span> <span class="n">1</span></div>
<div class="ln" style="top:433.02px">120</div>
<div class="code" style="top:433.02px">{</div>
<div class="ln" style="top:447.90px">121</div>
<div class="code" style="top:447.90px">  <span class="k">if</span>(time&lt;<span class="n">10</span>)</div>
<div class="ln" style="top:462.78px">122</div>
<div class="code" style="top:462.78px">    time++;</div>
<div class="ln" style="top:477.66px">123</div>
<div class="code" style="top:477.66px">  <span class="k">else</span></div>
<div class="ln" style="top:492.54px">124</div>
<div class="code" style="top:492.54px">  {</div>
<div style="left:309.78px;top:253.86px;width:1px;height:14.2px;background:#222"></div>
<div style="left:250.9px;top:0.00px;width:1.2px;height:396.00px;background:#969696"></div>
<div style="left:251.5px;top:68px;width:5.5px;height:1px;background:#8e8e8e"></div>
<div style="left:251.5px;top:157px;width:5.5px;height:1px;background:#8e8e8e"></div>
<div style="left:251.5px;top:172px;width:5.5px;height:1px;background:#8e8e8e"></div>
<div style="left:251.5px;top:380px;width:5.5px;height:1px;background:#8e8e8e"></div>
<div style="left:251.5px;top:395px;width:5.5px;height:1px;background:#8e8e8e"></div>
<div style="left:250.9px;top:441.02px;width:1.2px;height:62.98px;background:#969696"></div>
<div style="left:246.7px;top:3.10px;width:10px;height:9.6px;background:#fff;border:1.2px solid #929292"><div style="left:1.3px;top:3px;width:5px;height:1.2px;background:#8a8a8a"></div></div>
<div style="left:246.7px;top:92.38px;width:10px;height:9.6px;background:#fff;border:1.2px solid #929292"><div style="left:1.3px;top:3px;width:5px;height:1.2px;background:#8a8a8a"></div></div>
<div style="left:246.7px;top:434.62px;width:10px;height:9.6px;background:#fff;border:1.2px solid #929292"><div style="left:1.3px;top:3px;width:5px;height:1.2px;background:#8a8a8a"></div></div>
<div style="left:246.7px;top:494.14px;width:10px;height:9.6px;background:#fff;border:1.2px solid #929292"><div style="left:1.3px;top:3px;width:5px;height:1.2px;background:#8a8a8a"></div></div>
</div>
<div style="left:186.8px;top:550.4px;width:894px;height:14.8px;background:#f0f0f0"></div>
<div style="left:203px;top:551px;width:734.5px;height:13.6px;background:#c9c9c9"></div>
<svg style="left:190.5px;top:552.5px" width="9" height="10" viewBox="0 0 9 10"><path d="M6.8 0.8L2 5l4.8 4.2" stroke="#555" stroke-width="1.6" fill="none"/></svg>
<div style="left:185.6px;top:565.2px;width:895px;height:1.8px;background:#fdfdfd"></div>
<div style="left:183.4px;top:566.9px;width:897px;height:2.5px;background:#f6d375"></div>
<div style="left:183.4px;top:569.4px;width:897px;height:4.6px;background:#fbfbfb"></div>
<div style="left:0px;top:570.5px;width:184px;height:3.5px;background:#fafafa"></div>
<div style="left:0px;top:574px;width:1080px;height:17.4px;background:linear-gradient(#bccbde,#d8e3f0)"></div>
<div style="left:0px;top:591.4px;width:1080px;height:1.6px;background:#f4f6f8"></div>
<span class="t" style="left:4px;top:577.65px;font-size:11.4px;color:#161616;transform:scaleX(0.9802);transform-origin:0 0;">Build Output</span>
<div style="left:0px;top:592.8px;width:1080px;height:1.5px;background:#767676"></div>
<div style="left:0px;top:594.3px;width:1080px;height:66px;background:#fff;border-left:1.3px solid #8a8a8a"></div>
<div class="out" style="top:595.50px">Program Size: data=76.0 xdata=0 code=1403</div>
<div class="out" style="top:610.38px">creating hex file from &quot;main&quot;...</div>
<div class="out" style="top:625.26px">&quot;main&quot; - 0 Error(s), 0 Warning(s).</div>
<div class="out" style="top:640.14px">Build Time Elapsed:  00:00:01</div>
<div style="left:0px;top:659.2px;width:1080px;height:3px;background:#ececec"></div>
<span class="t" style="left:967.8px;top:639.51px;font-size:14.4px;color:#a3a3a3;transform:scaleX(0.8921);transform-origin:0 0;-webkit-text-stroke:0;">CSDN</span>
<span class="t" style="left:1010.6px;top:639.51px;font-size:14.4px;color:#a3a3a3;transform:scaleX(0.7388);transform-origin:0 0;-webkit-text-stroke:0;">@</span>
<span class="t" style="left:1021.6px;top:637.2px;-webkit-text-stroke:0;font-size:15px;letter-spacing:-0.8px;color:#a3a3a3;font-family:'Noto Sans CJK SC',sans-serif">白茶丫</span>
</body></html>
